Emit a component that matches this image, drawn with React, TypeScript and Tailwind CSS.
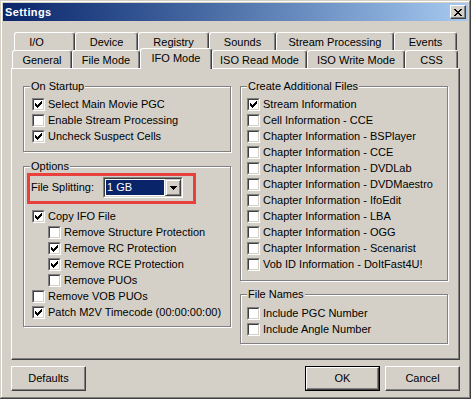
import React from 'react'

interface CheckProps {
  label: string
  checked?: boolean
  indent?: boolean
}

interface TabProps {
  label: string
  width: number
  selected?: boolean
  extra?: string
}

interface GroupProps {
  title: string
  className?: string
  children: React.ReactNode
}

// black tick, Marlett style, 7x7
const CheckMark = () => (
  <svg width="7" height="7" viewBox="0 0 7 7" shapeRendering="crispEdges">
    <path d="M6 0h1v1H6zM5 1h2v1H5zM0 2h1v1H0zM4 2h3v1H4zM0 3h2v1H0zM3 3h3v1H3zM0 4h5v1H0zM1 5h3v1H1zM2 6h1v1H2z" fill="#000" />
  </svg>
)

const Checkbox = ({ checked }: { checked?: boolean }) => (
  <div className="w-[13px] h-[13px] shrink-0 border border-t-[#808080] border-l-[#808080] border-b-white border-r-white">
    <div className="w-full h-full border border-t-[#404040] border-l-[#404040] border-b-[#d4d0c8] border-r-[#d4d0c8] bg-white flex items-center justify-center">
      {checked && <CheckMark />}
    </div>
  </div>
)

const Check: React.FC<CheckProps> = ({ label, checked, indent }) => (
  <div className={indent ? 'flex items-center h-[13px] gap-[3px] pl-[16px]' : 'flex items-center h-[13px] gap-[3px]'}>
    <Checkbox checked={checked} />
    <span className="text-[11px] leading-[13px] whitespace-nowrap">{label}</span>
  </div>
)

// etched group box
const Group: React.FC<GroupProps> = ({ title, className, children }) => (
  <div className={`relative w-[208px] border border-[#808080] shadow-[inset_1px_1px_0_#fff,1px_1px_0_#fff] ${className ?? ''}`}>
    <span className="absolute -top-[7px] left-[6px] px-[1px] bg-[#d4d0c8] text-[11px] leading-[13px] whitespace-nowrap">{title}</span>
    {children}
  </div>
)

const Tab: React.FC<TabProps> = ({ label, width, selected, extra }) => (
  <div
    style={{ width }}
    className={
      (selected
        ? 'relative z-10 h-[21px] -mt-[2px] shrink-0 flex justify-center pt-[3px] bg-[#d4d0c8] border-l border-t border-r border-l-white border-t-white border-r-[#404040] rounded-t-[3px] shadow-[inset_-1px_0_0_#808080] text-[11px] leading-[13px] whitespace-nowrap'
        : 'h-[18px] shrink-0 flex justify-center pt-[3px] bg-[#d4d0c8] border-l border-t border-r border-l-white border-t-white border-r-[#404040] rounded-t-[3px] shadow-[inset_-1px_0_0_#808080] text-[11px] leading-[13px] whitespace-nowrap') +
      (extra ? ' ' + extra : '')
    }
  >
    {label}
  </div>
)

const Button = ({ label, isDefault }: { label: string; isDefault?: boolean }) => (
  <div className={isDefault ? 'w-[75px] h-[25px] border border-black' : 'w-[75px] h-[25px]'}>
    <div className="w-full h-full flex items-center justify-center bg-[#d4d0c8] border border-t-white border-l-white border-b-[#404040] border-r-[#404040] shadow-[inset_-1px_-1px_0_#808080] text-[11px]">
      {label}
    </div>
  </div>
)

const App: React.FC = () => {
  return (
    <div className="w-[471px] h-[399px] bg-[#d4d0c8] p-[3px] text-black font-['Liberation_Sans','Arial',sans-serif] shadow-[inset_-1px_-1px_0_#404040,inset_1px_1px_0_#d4d0c8,inset_-2px_-2px_0_#808080,inset_2px_2px_0_#fff]">
      {/* Title bar */}
      <div className="h-[18px] flex items-center justify-between pl-[2px] pr-[2px] bg-linear-to-r from-[#0a246a] to-[#a6caf0]">
        <span className="text-white font-bold text-[11px] tracking-[0.4px] leading-[13px]">Settings</span>
        <div className="w-[16px] h-[14px] bg-[#d4d0c8] border border-t-white border-l-white border-b-[#404040] border-r-[#404040] shadow-[inset_-1px_-1px_0_#808080] flex items-center justify-center">
          <svg width="8" height="7" viewBox="0 0 8 7" shapeRendering="crispEdges">
            <path d="M0 0h2v1H0zM6 0h2v1H6zM1 1h2v1H1zM5 1h2v1H5zM2 2h4v1H2zM3 3h2v1H3zM2 4h4v1H2zM1 5h2v1H1zM5 5h2v1H5zM0 6h2v1H0zM6 6h2v1H6z" fill="#000" />
          </svg>
        </div>
      </div>

      <div className="pl-[8px] pt-[11px]">
        {/* Tabs, back row */}
        <div className="flex ml-[3px] h-[18px]">
          <Tab label="I/O" width={61} extra="pr-[16px]" />
          <Tab label="Device" width={63} />
          <Tab label="Registry" width={71} />
          <Tab label="Sounds" width={67} />
          <Tab label="Stream Processing" width={118} />
          <Tab label="Events" width={63} />
        </div>
        {/* Tabs, front row */}
        <div className="flex items-start ml-[1px] h-[18px]">
          <Tab label="General" width={60} />
          <Tab label="File Mode" width={68} />
          <Tab label="IFO Mode" width={72} selected />
          <Tab label="ISO Read Mode" width={95} />
          <Tab label="ISO Write Mode" width={98} />
          <Tab label="CSS" width={53} />
        </div>

        {/* Tab page */}
        <div className="w-[449px] h-[292px] flex gap-[9px] pl-[11px] pt-[17px] border border-t-white border-l-white border-b-[#404040] border-r-[#404040] shadow-[inset_-1px_-1px_0_#808080]">
          <div className="flex flex-col">
            <Group title="On Startup" className="pt-[11px] pb-[8px] pl-[8px]">
              <div className="flex flex-col gap-[3px]">
                <Check label="Select Main Movie PGC" checked />
                <Check label="Enable Stream Processing" />
                <Check label="Uncheck Suspect Cells" checked />
              </div>
            </Group>
            <Group title="Options" className="mt-[14px] pt-[6px] pb-[7px] pl-[8px]">
              <div className="-ml-[5px] w-[169px] h-[31px] border-[3px] border-[#e8403c] flex items-start pt-[1px] pl-[1px]">
                <span className="w-[72px] text-[11px] leading-[21px] whitespace-nowrap">File Splitting:</span>
                <div className="w-[80px] h-[21px] border border-t-[#808080] border-l-[#808080] border-b-white border-r-white">
                  <div className="w-full h-full flex border border-t-[#404040] border-l-[#404040] border-b-[#d4d0c8] border-r-[#d4d0c8] bg-white">
                    <div className="flex-1 p-[1px]">
                      <div className="h-full bg-[#0a246a] text-white text-[11px] leading-[15px] pl-[1px]">1 GB</div>
                    </div>
                    <div className="w-[16px] h-full flex items-center justify-center bg-[#d4d0c8] border border-t-[#d4d0c8] border-l-[#d4d0c8] border-b-[#404040] border-r-[#404040] shadow-[inset_1px_1px_0_#fff,inset_-1px_-1px_0_#808080]">
                      <svg width="7" height="4" viewBox="0 0 7 4" shapeRendering="crispEdges">
                        <path d="M0 0h7v1H0zM1 1h5v1H1zM2 2h3v1H2zM3 3h1v1H3z" fill="#000" />
                      </svg>
                    </div>
                  </div>
                </div>
              </div>
              <div className="flex flex-col gap-[3px] mt-[6px]">
                <Check label="Copy IFO File" checked />
                <Check label="Remove Structure Protection" indent />
                <Check label="Remove RC Protection" checked indent />
                <Check label="Remove RCE Protection" checked indent />
                <Check label="Remove PUOs" indent />
                <Check label="Remove VOB PUOs" />
                <Check label="Patch M2V Timecode (00:00:00:00)" checked />
              </div>
            </Group>
          </div>

          <div className="flex flex-col">
            <Group title="Create Additional Files" className="pt-[11px] pb-[9px] pl-[6px]">
              <div className="flex flex-col gap-[3px]">
                <Check label="Stream Information" checked />
                <Check label="Cell Information - CCE" />
                <Check label="Chapter Information - BSPlayer" />
                <Check label="Chapter Information - CCE" />
                <Check label="Chapter Information - DVDLab" />
                <Check label="Chapter Information - DVDMaestro" />
                <Check label="Chapter Information - IfoEdit" />
                <Check label="Chapter Information - LBA" />
                <Check label="Chapter Information - OGG" />
                <Check label="Chapter Information - Scenarist" />
                <Check label="Vob ID Information - DoItFast4U!" />
              </div>
            </Group>
            <Group title="File Names" className="mt-[13px] pt-[12px] pb-[7px] pl-[6px]">
              <div className="flex flex-col gap-[3px]">
                <Check label="Include PGC Number" />
                <Check label="Include Angle Number" />
              </div>
            </Group>
          </div>
        </div>

        {/* Buttons */}
        <div className="w-[449px] flex justify-between mt-[6px]">
          <Button label="Defaults" />
          <div className="flex gap-[5px]">
            <Button label="OK" isDefault />
            <Button label="Cancel" />
          </div>
        </div>
      </div>
    </div>
  )
}

export default App
